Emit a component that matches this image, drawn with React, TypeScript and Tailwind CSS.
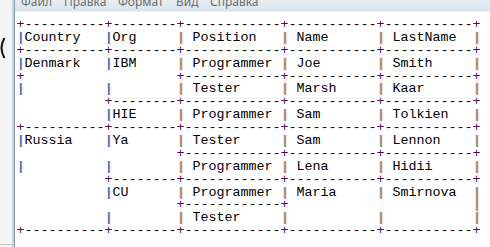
import type { ReactNode } from "react";

const LINES = [
  "+----------+--------+------------+-----------+-----------+",
  "|Country   |Org     | Position   | Name      | LastName  |",
  "+----------+--------+------------+-----------+-----------+",
  "|Denmark   |IBM     | Programmer | Joe       | Smith     |",
  "+                   +------------+-----------+-----------+",
  "|          |        | Tester     | Marsh     | Kaar      |",
  "           +--------+------------+-----------+-----------+",
  "           |HIE     | Programmer | Sam       | Tolkien   |",
  "+----------+--------+------------+-----------+-----------+",
  "|Russia    |Ya      | Tester     | Sam       | Lennon    |",
  "                    +------------+-----------+-----------+",
  "|          |        | Programmer | Lena      | Hidii     |",
  "           +--------+------------+-----------+-----------+",
  "           |CU      | Programmer | Maria     | Smirnova  |",
  "                    +------------+                       |",
  "           |        | Tester     |           |           |",
  "+----------+--------+------------+-----------+-----------+",
];

const MENU = [
  { label: "Файл", w: "w-[43px]" },
  { label: "Правка", w: "w-[54px]" },
  { label: "Формат", w: "w-[58px]" },
  { label: "Вид", w: "w-[34px]" },
  { label: "Справка", w: "w-[60px]" },
];

// ClearType-ish tint on the thin glyphs
function Line({ text }: { text: string }) {
  const out: ReactNode[] = [];
  let buf = "";
  const flush = (k: number) => {
    if (buf) out.push(<span key={`t${k}`}>{buf}</span>);
    buf = "";
  };
  [...text].forEach((ch, i) => {
    if (ch === "+") {
      flush(i);
      out.push(
        <span key={i} className="text-[#4a1048]">
          +
        </span>
      );
    } else if (ch === "|") {
      flush(i);
      out.push(
        i < 20 ? (
          <span key={i} className="text-[#3a62a3] [text-shadow:1px_0_0_#c58a4a]">
            |
          </span>
        ) : (
          <span key={i} className="text-[#c27a2c] [text-shadow:1px_0_0_#4a86c8]">
            |
          </span>
        )
      );
    } else {
      buf += ch;
    }
  });
  flush(text.length);
  return <div className="h-[12.9px] whitespace-pre leading-[12.9px]">{out}</div>;
}

export default function App() {
  return (
    <div className="flex h-[247px] w-[490px] overflow-hidden bg-white">
      {/* window behind */}
      <div className="flex w-[12px] flex-col bg-[#f4f4f4]">
        <div className="h-[37px]" />
        <svg width="12" height="22" viewBox="0 0 12 22">
          <path d="M4.5 1 Q-1.5 11 4.5 21" fill="none" stroke="#111" strokeWidth="2" />
        </svg>
        <div className="flex-1" />
        <div className="h-[1px] bg-[#c4c4c4]" />
        <div className="h-[2px]" />
      </div>

      {/* notepad frame */}
      <div className="w-[2px] bg-[#c8d3df]" />
      <div className="w-[1px] bg-[#8a98a8]" />

      <div className="flex flex-1 flex-col">
        <div className="flex h-[11px] overflow-hidden bg-gradient-to-b from-[#e9eef4] to-[#dae3ec] pl-[6px] font-['Noto_Sans',sans-serif] text-[12px] text-[#6e6e6e]">
          {MENU.map((m) => (
            <div key={m.label} className={`${m.w} mt-[-3.6px] shrink-0 leading-[12px]`}>
              {m.label}
            </div>
          ))}
        </div>
        <div className="h-[1px] bg-[#eef2f6]" />

        <div className="pl-[1.5px] pt-[7px] font-['Liberation_Mono',monospace] text-[13.33px] text-black">
          {LINES.map((l, i) => (
            <Line key={i} text={l} />
          ))}
        </div>
      </div>
    </div>
  );
}
